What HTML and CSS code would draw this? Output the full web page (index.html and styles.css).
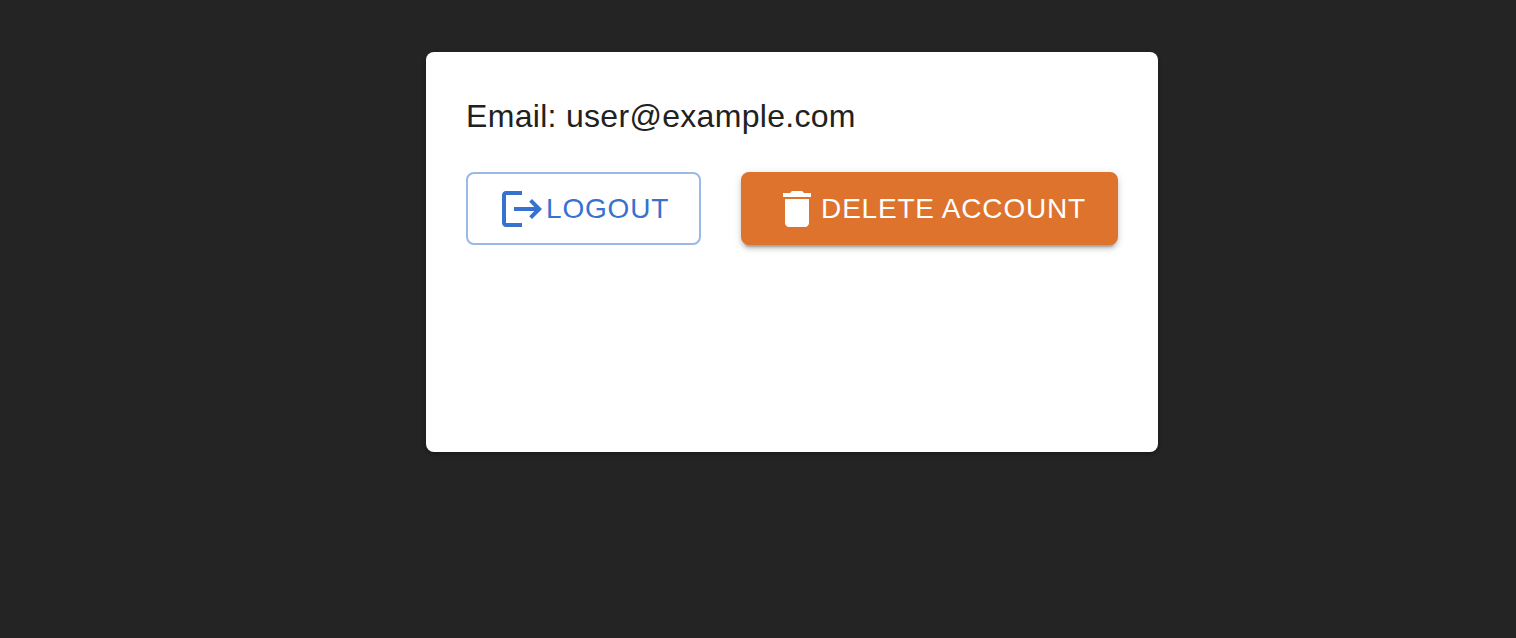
FILE: index.html
```html
<!DOCTYPE html>
<html lang="en">
<head>
<meta charset="utf-8">
<meta name="viewport" content="width=device-width, initial-scale=1">
<title>Account</title>
<link rel="stylesheet" href="styles.css">
</head>
<body>
<main class="page">
  <section class="card">
    <p class="email">Email: user@example.com</p>
    <div class="actions">
      <button class="button button-outlined" type="button">
        <svg class="icon" viewBox="0 0 24 24" aria-hidden="true"><path d="m17 7-1.410 1.410L18.170 11H8v2h10.170l-2.580 2.580L17 17l5-5zM4 5h8V3H4c-1.100 0-2 .9-2 2v14c0 1.100.9 2 2 2h8v-2H4z"/></svg>
        <span>LOGOUT</span>
      </button>
      <button class="button button-filled" type="button">
        <svg class="icon" viewBox="0 0 24 24" aria-hidden="true"><path d="M6 19c0 1.100.9 2 2 2h8c1.100 0 2-.9 2-2V7H6zM19 4h-3.500l-1-1h-5l-1 1H5v2h14z"/></svg>
        <span>DELETE ACCOUNT</span>
      </button>
    </div>
  </section>
</main>
</body>
</html>
```
FILE: styles.css
```css
* {
  box-sizing: border-box;
}

body {
  margin: 0;
  background: #242424;
  font-family: "Liberation Sans", Arial, sans-serif;
}

.page {
  display: flex;
  justify-content: center;
  padding: 52px 0 52px 68px;
}

.card {
  min-height: 400px;
  padding: 40px;
  border-radius: 8px;
  background: #fff;
  color: #212121;
  box-shadow: 0 2px 4px rgba(0, 0, 0, 0.3);
}

.email {
  margin: 0 0 32px;
  font-size: 32px;
  line-height: 48px;
  letter-spacing: 0.00938em;
}

.actions {
  display: flex;
  flex-wrap: wrap;
  gap: 40px;
}

.button {
  display: flex;
  align-items: center;
  padding: 10px 30px;
  border: 2px solid transparent;
  border-radius: 8px;
  font-family: inherit;
  font-size: 28px;
  line-height: 49px;
  letter-spacing: 0.02857em;
  white-space: nowrap;
  cursor: pointer;
}

.button-outlined {
  border-color: #9bb8e8;
  background: #fff;
  color: #3672ce;
}

.button-filled {
  border-color: #dd732d;
  background: #dd732d;
  color: #fff;
  box-shadow: 0 6px 2px -4px rgba(0, 0, 0, 0.2), 0 4px 4px rgba(0, 0, 0, 0.14), 0 2px 10px rgba(0, 0, 0, 0.12);
}

.icon {
  width: 48px;
  height: 48px;
  fill: currentColor;
}
```
